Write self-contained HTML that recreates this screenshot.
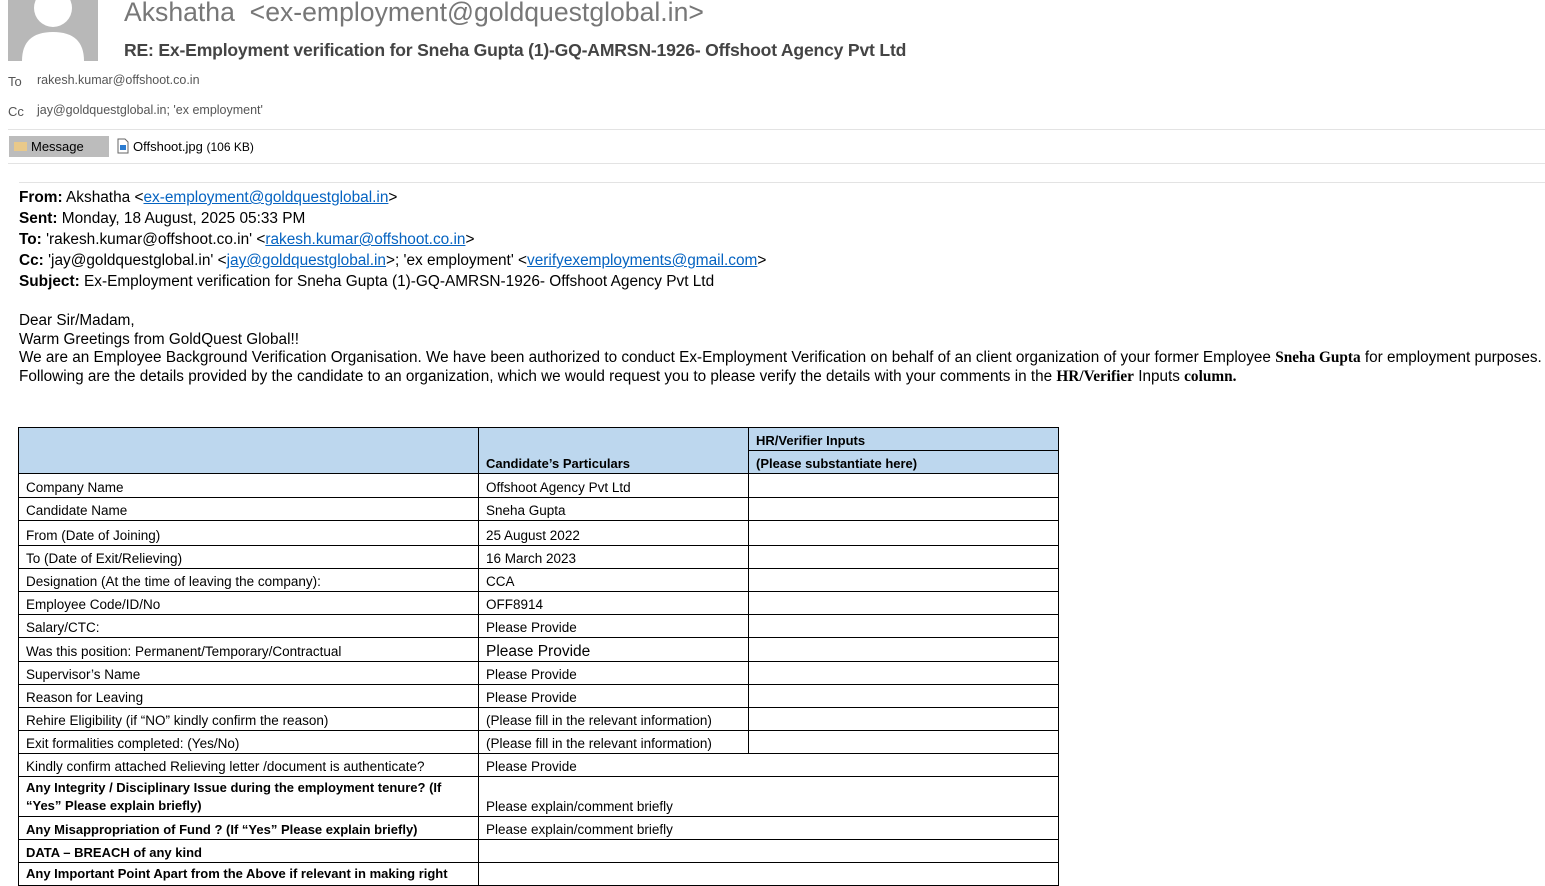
<!DOCTYPE html>
<html><head><meta charset="utf-8">
<style>
body{margin:0;width:1545px;height:876px;overflow:hidden;background:#fff;font-family:"Liberation Sans",sans-serif;color:#000;position:relative}
.abs{position:absolute;white-space:nowrap}
.avatar{position:absolute;left:8px;top:0;width:90px;height:61px;background:#b8b8b8;overflow:hidden}
.hd{font-size:13px;color:#555}
.body{position:absolute;left:19px;top:187px;font-size:15.4px;line-height:21px;white-space:nowrap}
.body a{color:#0563c1;text-decoration:underline}
.p2{position:absolute;left:19px;top:312px;font-size:15.3px;line-height:18.5px;white-space:nowrap}
table{position:absolute;left:18px;top:427px;border-collapse:collapse;table-layout:fixed;font-size:13.5px}
td{border:1px solid #000;padding:0 7px 1px;vertical-align:bottom;line-height:17px;white-space:nowrap;overflow:hidden}
.h td{background:#bdd7ee;font-weight:bold;font-size:13px}
.b{font-weight:bold;font-size:13px}
</style></head><body>
<div class="avatar">
<svg width="90" height="61"><circle cx="45" cy="8" r="19" fill="#fff"/><path d="M14 61 Q14 32 45 32 Q76 32 76 61Z" fill="#fff"/></svg>
</div>
<div class="abs" style="left:124px;top:-3px;font-size:26.6px;color:#777">Akshatha&nbsp; &lt;ex-employment@goldquestglobal.in&gt;</div>
<div class="abs" style="left:124px;top:40px;font-size:17.6px;font-weight:bold;color:#444;letter-spacing:-0.2px">RE: Ex-Employment verification for Sneha Gupta (1)-GQ-AMRSN-1926- Offshoot Agency Pvt Ltd</div>
<div class="abs hd" style="left:8px;top:74px">To</div>
<div class="abs hd" style="left:37px;top:73px;font-size:12.5px">rakesh.kumar@offshoot.co.in</div>
<div class="abs hd" style="left:8px;top:104px">Cc</div>
<div class="abs hd" style="left:37px;top:103px;font-size:12.5px">jay@goldquestglobal.in; 'ex employment'</div>
<div class="abs" style="left:8px;top:129px;width:1537px;height:1px;background:#e3e3e3"></div>
<div class="abs" style="left:9px;top:136px;width:100px;height:21px;background:#bcbcbc"></div>
<div class="abs" style="left:14px;top:142px;width:13px;height:9px;background:#e9c98a"></div>
<div class="abs" style="left:31px;top:139px;font-size:13px">Message</div>
<svg class="abs" style="left:117px;top:138px" width="12" height="16"><path d="M1 1h7l3 3v11H1z" fill="#fff" stroke="#666"/><rect x="3" y="7" width="6" height="5" fill="#2a7bd0"/></svg>
<div class="abs" style="left:133px;top:139px;font-size:13px">Offshoot.jpg <span style="font-size:12px">(106 KB)</span></div>
<div class="abs" style="left:8px;top:163px;width:1537px;height:1px;background:#e3e3e3"></div>
<div class="abs" style="left:19px;top:182px;width:1526px;height:1px;background:#e3e3e3"></div>
<div class="body">
<b>From:</b> Akshatha &lt;<a>ex-employment@goldquestglobal.in</a>&gt;<br>
<b>Sent:</b> Monday, 18 August, 2025 05:33 PM<br>
<b>To:</b> 'rakesh.kumar@offshoot.co.in' &lt;<a>rakesh.kumar@offshoot.co.in</a>&gt;<br>
<b>Cc:</b> 'jay@goldquestglobal.in' &lt;<a>jay@goldquestglobal.in</a>&gt;; 'ex employment' &lt;<a>verifyexemployments@gmail.com</a>&gt;<br>
<b>Subject:</b> Ex-Employment verification for Sneha Gupta (1)-GQ-AMRSN-1926- Offshoot Agency Pvt Ltd
</div>
<div class="p2">
Dear Sir/Madam,<br>
Warm Greetings from GoldQuest Global!!<br>
We are an Employee Background Verification Organisation. We have been authorized to conduct Ex-Employment Verification on behalf of an client organization of your former Employee <b style="font-family:'Liberation Serif',serif">Sneha Gupta</b> for employment purposes.<br>
Following are the details provided by the candidate to an organization, which we would request you to please verify the details with your comments in the <b style="font-family:'Liberation Serif',serif">HR/Verifier</b> Inputs <b style="font-family:'Liberation Serif',serif">column.</b>
</div>
<table>
<colgroup><col style="width:460px"><col style="width:270px"><col style="width:310px"></colgroup>
<tr class="h" style="height:23px"><td rowspan="2"></td><td rowspan="2">Candidate’s Particulars</td><td>HR/Verifier Inputs</td></tr>
<tr class="h" style="height:23px"><td>(Please substantiate here)</td></tr>
<tr style="height:24px"><td>Company Name</td><td>Offshoot Agency Pvt Ltd</td><td></td></tr>
<tr style="height:23px"><td>Candidate Name</td><td>Sneha Gupta</td><td></td></tr>
<tr style="height:25px"><td>From (Date of Joining)</td><td>25 August 2022</td><td></td></tr>
<tr style="height:23px"><td>To (Date of Exit/Relieving)</td><td>16 March 2023</td><td></td></tr>
<tr style="height:23px"><td>Designation (At the time of leaving the company):</td><td>CCA</td><td></td></tr>
<tr style="height:23px"><td>Employee Code/ID/No</td><td>OFF8914</td><td></td></tr>
<tr style="height:23px"><td>Salary/CTC:</td><td>Please Provide</td><td></td></tr>
<tr style="height:24px"><td>Was this position: Permanent/Temporary/Contractual</td><td style="font-size:15.5px">Please Provide</td><td></td></tr>
<tr style="height:23px"><td>Supervisor’s Name</td><td>Please Provide</td><td></td></tr>
<tr style="height:23px"><td>Reason for Leaving</td><td>Please Provide</td><td></td></tr>
<tr style="height:23px"><td>Rehire Eligibility (if “NO” kindly confirm the reason)</td><td>(Please fill in the relevant information)</td><td></td></tr>
<tr style="height:23px"><td>Exit formalities completed: (Yes/No)</td><td>(Please fill in the relevant information)</td><td></td></tr>
<tr style="height:23px"><td>Kindly confirm attached Relieving letter /document is authenticate?</td><td colspan="2">Please Provide</td></tr>
<tr style="height:40px"><td class="b" style="line-height:18px">Any Integrity / Disciplinary Issue during the employment tenure? (If<br>“Yes” Please explain briefly)</td><td colspan="2">Please explain/comment briefly</td></tr>
<tr style="height:23px"><td class="b">Any Misappropriation of Fund ? (If “Yes” Please explain briefly)</td><td colspan="2">Please explain/comment briefly</td></tr>
<tr style="height:23px"><td class="b">DATA – BREACH of any kind</td><td colspan="2"></td></tr>
<tr style="height:23px"><td class="b" style="vertical-align:top;padding-top:2px">Any Important Point Apart from the Above if relevant in making right</td><td colspan="2"></td></tr>
</table>
</body></html>
